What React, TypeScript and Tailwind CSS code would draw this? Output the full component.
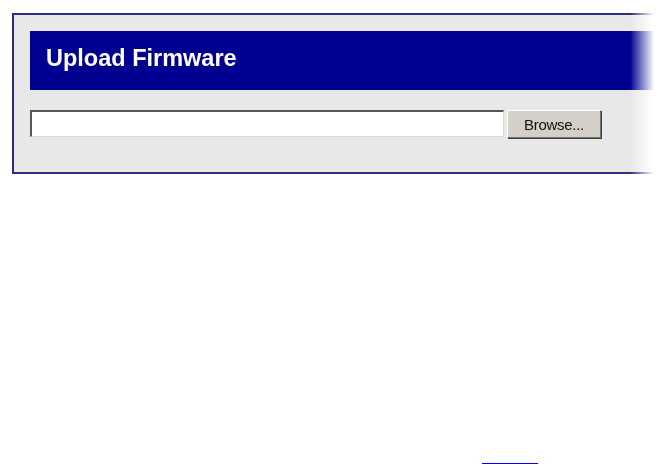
import React from "react";

export default function App() {
  return (
    <div
      className="min-h-[464px] w-[661px] bg-white flex flex-col overflow-hidden"
      style={{ fontFamily: '"Liberation Sans", Arial, sans-serif' }}
    >
      <div className="mt-[13px] ml-[12px] w-[700px] shrink-0 [mask-image:linear-gradient(to_right,black_618px,transparent_642px)]">
        <div className="border-2 border-[#2e2e80] bg-[#e8e8e8] px-[16px] pt-[16px] pb-[34px]">
          <div className="h-[59px] bg-[#000090] pl-[16px] pt-[16px]">
            <span className="text-white font-bold text-[23.5px] leading-none">Upload Firmware</span>
          </div>
          <div className="mt-[20px] flex items-start">
            <div className="w-[474px] h-[27px] bg-white border-t-2 border-l-2 border-r border-b border-t-[#555] border-l-[#555] border-r-[#d8d8d8] border-b-[#d8d8d8]" />
            <button className="ml-[3px] w-[94px] h-[28px] bg-[#d4d0c8] border border-t-white border-l-white border-r-[#707070] border-b-[#707070] shadow-[1px_1px_0_#404040] flex items-center justify-center text-[15px] tracking-[-0.3px] text-[#111] leading-none">
              Browse...
            </button>
          </div>
        </div>
      </div>
      <div className="mt-auto ml-[482px] w-[56px] h-px bg-[#0000ee]" />
    </div>
  );
}
